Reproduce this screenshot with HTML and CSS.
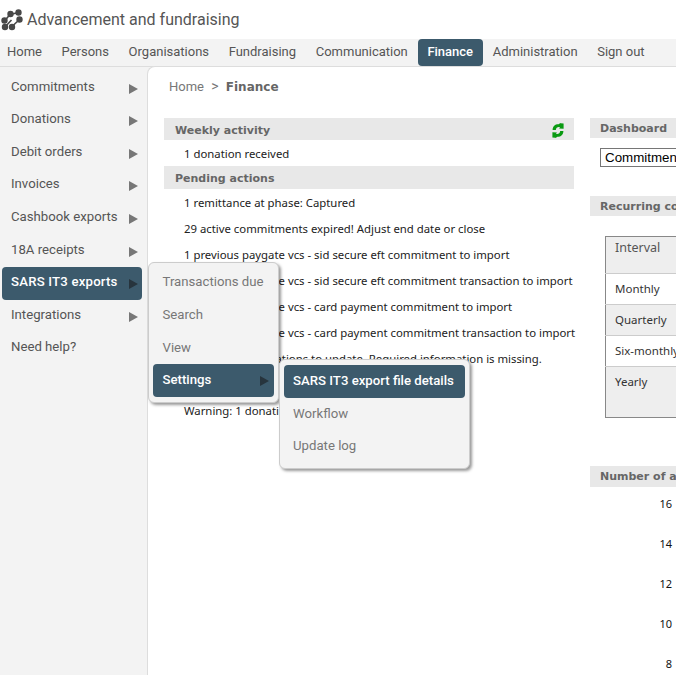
FILE: index.html
```html
<!DOCTYPE html>
<html lang="en">
<head>
    <meta charset="UTF-8">
    <meta name="viewport" content="width=device-width, initial-scale=1.0">
    <title>Advancement and fundraising</title>
    <link rel="stylesheet" href="styles.css">
</head>
<body>

<header class="app-header">
    <svg class="logo" width="24" height="22" viewBox="0 0 24 22">
        <g fill="#484848" stroke="#484848" stroke-width="1.6">
            <path d="M9 5.5 L17.5 3.5 M3.5 12 L9 5.5"/>
            <path d="M11 17.5 L19 10"/>
            <path d="M4 18 L10.5 11"/>
            <circle cx="17.5" cy="3.5" r="2.4"/>
            <circle cx="9.5" cy="5" r="2.4"/>
            <circle cx="3.5" cy="11.5" r="2.4"/>
            <circle cx="18.5" cy="10.5" r="2.4"/>
            <circle cx="11" cy="18" r="2.4"/>
            <circle cx="4" cy="18" r="2.4"/>
        </g>
    </svg>
    <span class="app-title">Advancement and fundraising</span>
</header>

<nav class="top-nav">
    <a href="#">Home</a>
    <a href="#">Persons</a>
    <a href="#">Organisations</a>
    <a href="#">Fundraising</a>
    <a href="#">Communication</a>
    <a href="#" class="active">Finance</a>
    <a href="#">Administration</a>
    <a href="#">Sign out</a>
</nav>

<div class="page">
    <aside class="side-nav">
        <a href="#">Commitments<i class="arrow"></i></a>
        <a href="#">Donations<i class="arrow"></i></a>
        <a href="#">Debit orders<i class="arrow"></i></a>
        <a href="#">Invoices<i class="arrow"></i></a>
        <a href="#">Cashbook exports<i class="arrow"></i></a>
        <a href="#">18A receipts<i class="arrow"></i></a>
        <a href="#" class="active">SARS IT3 exports<i class="arrow"></i></a>
        <a href="#">Integrations<i class="arrow"></i></a>
        <a href="#">Need help?</a>
    </aside>

    <main class="content">
        <div class="breadcrumb">Home <span class="sep">&gt;</span> <b>Finance</b></div>

        <div class="columns">
            <section class="col-left">
                <h3 class="bar weekly">Weekly activity
                    <svg class="refresh" width="12" height="15" viewBox="0 0 12 15">
                        <path fill="#0a9a12" d="M.6 7C.6 3 3.4 1 6.6 1.2L8.4 0l.2 .2L11.6 .4v5.4l-4.6-.2 1-1.4C6 3.4 4 4.6 3.8 7Z"/>
                        <path fill="#0a9a12" d="M11.4 8C11.4 12 8.6 14 5.4 13.8L3.6 15l-.2-.2L.4 14.6V9.2l4.6 .2-1 1.4C6 11.6 8 10.4 8.2 8Z"/>
                    </svg>
                </h3>
                <p class="row">1 donation received</p>
                <h3 class="bar pending">Pending actions</h3>
                <p class="row">1 remittance at phase: Captured</p>
                <p class="row">29 active commitments expired! Adjust end date or close</p>
                <p class="row">1 previous paygate vcs - sid secure eft commitment to import</p>
                <p class="row">1 previous paygate vcs - sid secure eft commitment transaction to import</p>
                <p class="row">1 previous paygate vcs - card payment commitment to import</p>
                <p class="row">1 previous paygate vcs - card payment commitment transaction to import</p>
                <p class="row">12 donor organisations to update. Required information is missing.</p>
                <p class="row">2 persons to update.</p>
                <p class="row">Warning: 1 donation without a receipt.</p>
            </section>

            <section class="col-right">
                <h3 class="bar small">Dashboard</h3>
                <select class="dash-select">
                    <option>Commitments and donations</option>
                </select>

                <h3 class="bar small recurring">Recurring commitments</h3>
                <table class="interval-table">
                    <tr class="head"><td>Interval</td></tr>
                    <tr><td>Monthly</td></tr>
                    <tr class="alt"><td>Quarterly</td></tr>
                    <tr><td>Six-monthly</td></tr>
                    <tr class="alt last"><td>Yearly</td></tr>
                </table>

                <h3 class="bar small number">Number of active commitments</h3>
                <ul class="axis">
                    <li>16</li>
                    <li>14</li>
                    <li>12</li>
                    <li>10</li>
                    <li>8</li>
                </ul>
            </section>
        </div>
    </main>
</div>

<div class="flyout menu-one">
    <a href="#">Transactions due</a>
    <a href="#">Search</a>
    <a href="#">View</a>
    <a href="#" class="active">Settings<i class="arrow"></i></a>
</div>

<div class="flyout menu-two">
    <a href="#" class="active">SARS IT3 export file details</a>
    <a href="#">Workflow</a>
    <a href="#">Update log</a>
</div>

</body>
</html>
```

FILE: styles.css
```css
html, body {
    height: 100%;
}

body {
    font-family: Roboto, Arial, sans-serif;
    background-color: #f3f3f3;
    margin: 0;
    padding: 0;
    overflow: hidden;
    position: relative;
}

a {
    text-decoration: none;
}

.app-header {
    background-color: #fff;
    height: 39px;
    display: flex;
    align-items: center;
    padding-left: 1px;
    box-sizing: border-box;
}

.logo {
    margin-right: 2px;
}

.app-title {
    font-size: 16px;
    color: #555;
}

.top-nav {
    display: flex;
    height: 27px;
    border-bottom: 1px solid #ddd;
}

.top-nav a {
    font-size: 13px;
    color: #555;
    line-height: 25px;
    height: 27px;
    padding: 0 9.8px;
    border-radius: 4px;
}

.top-nav a:first-child {
    padding-left: 7px;
}

.top-nav a.active {
    background-color: #3c5a6c;
    color: #fff;
    font-weight: 500;
}

.page {
    display: flex;
    height: calc(100% - 67px);
}

.side-nav {
    width: 147px;
    flex: none;
    padding: 4.4px 0 0 2px;
    box-sizing: border-box;
}

.side-nav a {
    display: flex;
    justify-content: space-between;
    align-items: center;
    width: 140px;
    height: 32.6px;
    box-sizing: border-box;
    padding: 0 4px 3px 9px;
    font-size: 13.2px;
    color: #555;
    border-radius: 4px;
}

.side-nav a.active,
.flyout a.active {
    background-color: #3c5a6c;
    color: #fff;
    font-weight: 500;
}

.side-nav a.active {
    letter-spacing: 0.2px;
}

.arrow {
    width: 0;
    height: 0;
    border-left: 9px solid #777;
    border-top: 5px solid transparent;
    border-bottom: 5px solid transparent;
    margin-top: 5px;
}

.active .arrow {
    border-left-color: #27343d;
}

.content {
    flex: 1;
    min-width: 0;
    background-color: #fff;
    border-left: 1px solid #ddd;
    border-top: 1px solid #ddd;
    margin-top: -1px;
    border-top-left-radius: 8px;
    overflow: hidden;
    padding: 0 0 0 16px;
}

.breadcrumb {
    font-size: 13px;
    color: #777;
    padding: 11px 0 0 5px;
    height: 40px;
    line-height: 16px;
}

.breadcrumb b {
    color: #666;
    font-family: "DejaVu Sans", sans-serif;
    font-size: 12px;
}

.breadcrumb .sep {
    font-size: 14px;
    margin: 0 4px;
}

.columns {
    display: flex;
    width: 720px;
    gap: 16px;
}

.col-left {
    width: 410px;
    flex: none;
}

.col-right {
    flex: 1;
    min-width: 0;
}

.bar {
    margin: 0;
    height: 22px;
    line-height: 22px;
    background-color: #e8e8e8;
    font-family: "DejaVu Sans", Verdana, sans-serif;
    font-size: 11px;
    color: #666;
    padding-left: 11px;
    position: relative;
    white-space: nowrap;
}

.bar.weekly {
    line-height: 25px;
}

.bar.small {
    height: 20px;
    line-height: 22px;
    padding-left: 10px;
}

.bar.pending {
    height: 23px;
    line-height: 25px;
}

.refresh {
    position: absolute;
    right: 10px;
    top: 5px;
}

.row {
    margin: 0;
    height: 26px;
    line-height: 28px;
    font-family: "Noto Sans", Tahoma, sans-serif;
    font-size: 11.35px;
    color: #222;
    padding-left: 20px;
    white-space: nowrap;
}

.dash-select {
    display: block;
    margin: 10px 0 0 10px;
    width: 220px;
    height: 19px;
    font-family: Arial, "Liberation Sans", sans-serif;
    font-size: 13.33px;
    background-color: #fff;
    border: 1px solid #767676;
    border-radius: 0;
    padding: 0;
}

.bar.recurring {
    margin-top: 29px;
}

.interval-table {
    margin: 20px 0 0 15px;
    width: 180px;
    border-collapse: collapse;
    border: 1px solid #888;
    background-color: #fff;
    font-family: "Noto Sans", Tahoma, sans-serif;
    font-size: 11.5px;
    color: #333;
}

.interval-table td {
    height: 31px;
    padding: 0 0 2px 9px;
    box-sizing: border-box;
    border-bottom: 1px solid #ccc;
}

.interval-table .head td {
    height: 37px;
    background-color: #eee;
    vertical-align: top;
    padding: 2px 0 0 9px;
    font-size: 12.5px;
    color: #555;
}

.interval-table .alt td {
    background-color: #eee;
}

.interval-table .last td {
    height: 51px;
    vertical-align: top;
    padding-top: 7px;
    border-bottom: 0;
}

.bar.number {
    margin-top: 48px;
    height: 21px;
    line-height: 22px;
}

.axis {
    list-style: none;
    margin: 0;
    padding: 7px 0 0;
    width: 82px;
    font-family: "Noto Sans", Tahoma, sans-serif;
    font-size: 11px;
    color: #111;
    text-align: right;
}

.axis li {
    height: 40px;
    line-height: 20px;
}

.flyout {
    position: absolute;
    background-color: #f3f3f3;
    border: 1px solid #ccc;
    border-radius: 6px;
    box-shadow: 2px 2px 3px rgba(0, 0, 0, 0.4);
    padding: 0 4px 5px;
    box-sizing: border-box;
}

.flyout a {
    display: flex;
    justify-content: space-between;
    align-items: center;
    height: 32.6px;
    box-sizing: border-box;
    padding: 0 9px 1.5px 9.5px;
    font-size: 13.2px;
    color: #777;
    border-radius: 4px;
    white-space: nowrap;
}

.flyout .arrow {
    margin-top: 3.5px;
}

.menu-one {
    left: 148px;
    top: 262px;
    width: 131px;
    padding-top: 3.4px;
}

.menu-one a.active {
    padding-right: 5px;
}

.menu-two {
    left: 279px;
    top: 359px;
    width: 191px;
    padding-top: 5px;
    z-index: 2;
}

.menu-two a {
    padding-left: 9px;
}
```
